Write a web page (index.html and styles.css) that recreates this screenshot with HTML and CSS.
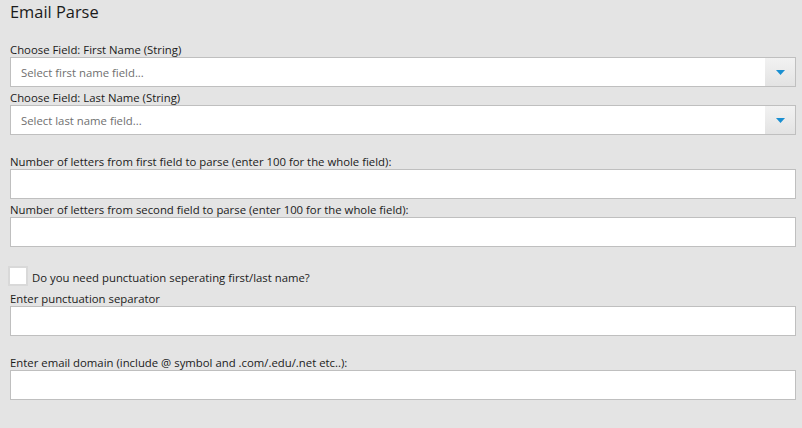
FILE: index.html
```html
<!DOCTYPE html>
<html>
<head>
<meta charset="utf-8">
<link rel="stylesheet" href="styles.css">
</head>
<body>
<div class="page">
  <h1 class="title">Email Parse</h1>
  <div class="group first">
    <div class="label">Choose Field: First Name (String)</div>
    <div class="select"><span class="placeholder">Select first name field...</span><span class="btn"><svg width="9" height="5" viewBox="0 0 9 5"><path d="M0 0H9L4.5 5Z" fill="#1a8fd1"/></svg></span></div>
    <div class="label">Choose Field: Last Name (String)</div>
    <div class="select"><span class="placeholder">Select last name field...</span><span class="btn"><svg width="9" height="5" viewBox="0 0 9 5"><path d="M0 0H9L4.5 5Z" fill="#1a8fd1"/></svg></span></div>
  </div>
  <div class="group">
    <div class="label">Number of letters from first field to parse (enter 100 for the whole field):</div>
    <div class="input"></div>
    <div class="label">Number of letters from second field to parse (enter 100 for the whole field):</div>
    <div class="input"></div>
  </div>
  <div class="check-row">
    <span class="checkbox"></span>
    <span class="check-text">Do you need punctuation seperating first/last name?</span>
  </div>
  <div class="group tight">
    <div class="label">Enter punctuation separator</div>
    <div class="input"></div>
  </div>
  <div class="group">
    <div class="label">Enter email domain (include @ symbol and .com/.edu/.net etc..):</div>
    <div class="input"></div>
  </div>
</div>
</body>
</html>
```
FILE: styles.css
```css
html, body {
  margin: 0;
  padding: 0;
  background: #e4e4e4;
}
body {
  font-family: "Open Sans", "Noto Sans", sans-serif;
  color: #1b1b1b;
  width: 802px;
  height: 428px;
  overflow: hidden;
}
.page {
  padding: 0 6px 0 10px;
}
.title {
  margin: 0;
  height: 39px;
  font-size: 16.4px;
  font-weight: 400;
  line-height: 24px;
  padding-top: 0;
}
.label {
  height: 18px;
  line-height: 21px;
  font-size: 11.35px;
  white-space: nowrap;
}
.group {
  margin-top: 16px;
}
.group.first {
  margin-top: 0;
}
.group.tight {
  margin-top: 0;
}
.select, .input {
  box-sizing: border-box;
  height: 30px;
  border: 1px solid #bfbfbf;
  background: #fff;
}
.select {
  display: flex;
  align-items: stretch;
}
.placeholder {
  flex: 1;
  font-size: 11.35px;
  color: #6f6f6f;
  line-height: 29px;
  padding-left: 10px;
}
.btn {
  width: 30px;
  display: flex;
  align-items: center;
  justify-content: center;
  background: linear-gradient(#f2f2f2, #e3e3e3);
}
.check-row {
  display: flex;
  align-items: center;
  height: 24px;
  margin: 17px 0 0 -2px;
}
.checkbox {
  box-sizing: border-box;
  width: 20px;
  height: 20px;
  border: 2px solid #d9d9d9;
  background: #fff;
}
.check-text {
  font-size: 11.35px;
  margin-left: 4px;
  padding-top: 2px;
}
```
